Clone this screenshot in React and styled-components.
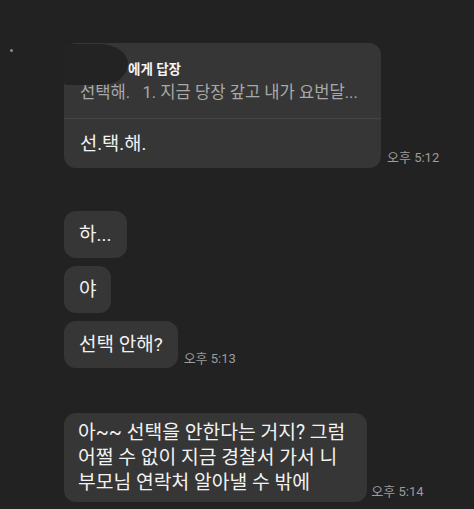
import React from "react";
import styled, { createGlobalStyle } from "styled-components";

const Global = createGlobalStyle`
  html, body { margin: 0; padding: 0; background: #222222; }
  body { font-family: Roboto, "Noto Sans CJK KR", sans-serif; }
`;

const Page = styled.div`
  width: 474px;
  height: 509px;
  box-sizing: border-box;
  background: #222222;
  padding: 43px 0 0 64px;
  display: flex;
  flex-direction: column;
  overflow: hidden;
  position: relative;
`;

const Speck = styled.div`
  position: absolute;
  left: 10px;
  top: 49px;
  width: 3px;
  height: 3px;
  border-radius: 50%;
  background: #8a8a8a;
`;

const Group = styled.div`
  display: flex;
  flex-direction: column;
  gap: 8px;
  margin-top: ${(p) => p.$top || 0}px;
`;

const Row = styled.div`
  display: flex;
  align-items: flex-end;
  gap: ${(p) => p.$gap ?? 6}px;
`;

const Bubble = styled.div`
  position: relative;
  background: #363636;
  border-radius: 12px;
  color: #f2f2f2;
  font-size: ${(p) => (p.$multi ? 19.3 : 19)}px;
  line-height: ${(p) => (p.$multi ? 25 : 27)}px;
  padding: ${(p) => (p.$multi ? "7px 22px 7px 14px" : "10px 15px")};
  white-space: nowrap;
  box-sizing: border-box;
`;

const ReplyBubble = styled.div`
  position: relative;
  width: 317px;
  background: #363636;
  border-radius: 12px;
  overflow: hidden;
  display: flex;
  flex-direction: column;
`;

const ReplyHead = styled.div`
  padding: 17px 16px 14px;
  display: flex;
  flex-direction: column;
  gap: 3px;
  border-bottom: 1px solid #434343;
`;

const ReplyTitle = styled.div`
  font-size: 13.5px;
  font-weight: 700;
  color: #f4f4f4;
  line-height: 19px;
  white-space: nowrap;
`;

const HiddenName = styled.span`
  display: inline-block;
  width: 48px;
  overflow: hidden;
  vertical-align: top;
`;

const ReplyPreview = styled.div`
  font-size: 16.6px;
  color: #a9a9a9;
  line-height: 22px;
  white-space: pre;
  overflow: hidden;
  text-overflow: ellipsis;
`;

const ReplyMain = styled.div`
  padding: 13.5px 16px 13.5px;
  font-size: 18.7px;
  line-height: 22px;
  color: #f4f4f4;
`;

const Redact = styled.div`
  position: absolute;
  left: -4px;
  top: 1px;
  width: 68px;
  height: 41px;
  background: #232323;
  border-radius: 12px 30px 26px 8px / 12px 20px 22px 10px;
`;

const Time = styled.span`
  font-size: 13px;
  color: #9c9c9c;
  line-height: 16px;
  padding-bottom: ${(p) => p.$pb ?? 3}px;
  white-space: nowrap;
`;

export default function App() {
  return (
    <>
      <Global />
      <Page>
        <Speck />
        <Row>
          <ReplyBubble>
            <ReplyHead>
              <ReplyTitle>
                <HiddenName>○○○</HiddenName>에게 답장
              </ReplyTitle>
              <ReplyPreview>{"선택해.   1. 지금 당장 갚고 내가 요번달..."}</ReplyPreview>
            </ReplyHead>
            <ReplyMain>선.택.해.</ReplyMain>
            <Redact />
          </ReplyBubble>
          <Time $pb={2}>오후 5:12</Time>
        </Row>

        <Group $top={43}>
          <Row>
            <Bubble>하...</Bubble>
          </Row>
          <Row>
            <Bubble>야</Bubble>
          </Row>
          <Row>
            <Bubble>선택 안해?</Bubble>
            <Time $pb={1}>오후 5:13</Time>
          </Row>
        </Group>

        <Group $top={45}>
          <Row $gap={4}>
            <Bubble $multi>
              아~~ 선택을 안한다는 거지? 그럼
              <br />
              어쩔 수 없이 지금 경찰서 가서 니
              <br />
              부모님 연락처 알아낼 수 밖에
            </Bubble>
            <Time $pb={2}>오후 5:14</Time>
          </Row>
        </Group>
      </Page>
    </>
  );
}
